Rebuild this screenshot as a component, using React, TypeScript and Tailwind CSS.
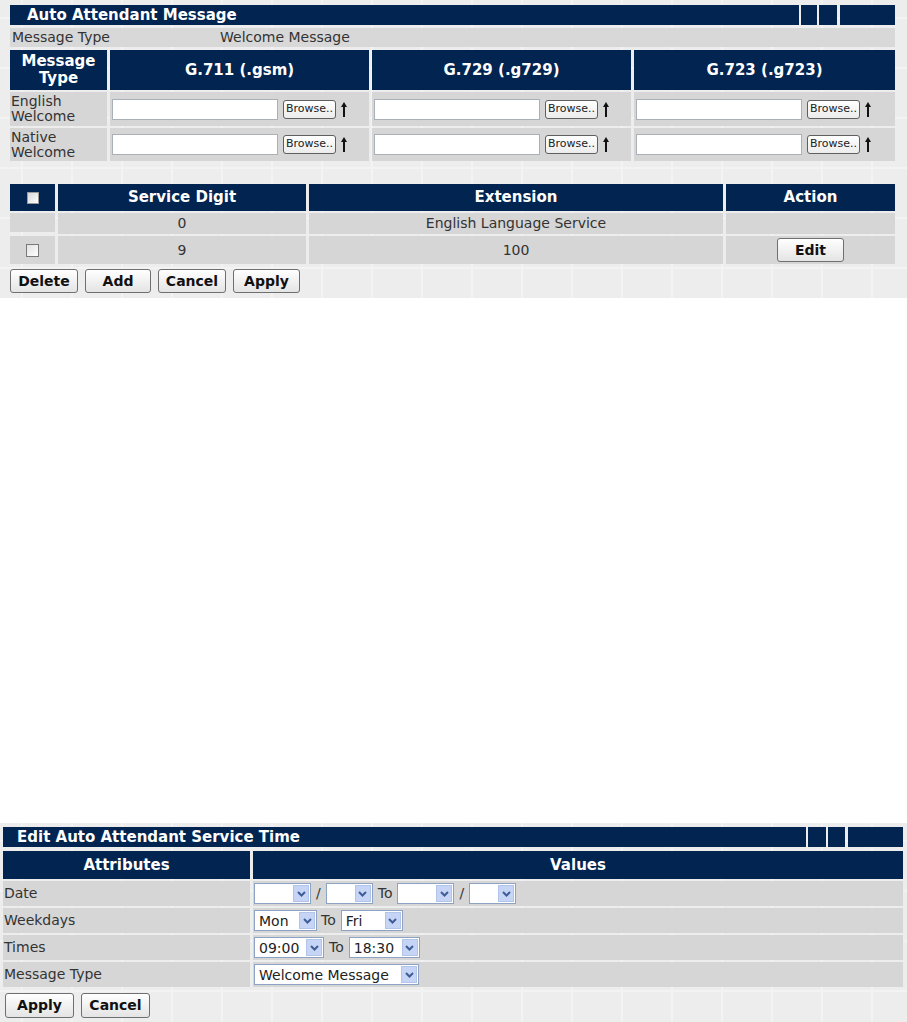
import React from "react";

const FONT = "font-['DejaVu_Sans','Verdana',sans-serif]";
const GRIDBG =
  "bg-[#ededed] bg-[image:linear-gradient(90deg,#f3f3f3_2px,transparent_2px),linear-gradient(#f3f3f3_2px,transparent_2px)] bg-size-[50px_50px] bg-position-[21px_17px]";

function TitleBar({
  title,
  padClass,
  b1,
  b2,
}: {
  title: string;
  padClass: string;
  b1: string;
  b2: string;
}) {
  return (
    <div className="flex h-[20px] gap-[2px]">
      <div
        className={`flex-1 bg-[#022450] text-white font-bold text-[15px] leading-[20px] ${padClass}`}
      >
        {title}
      </div>
      <div className={`${b1} bg-[#022450]`} />
      <div className={`${b2} bg-[#022450]`} />
      <div className="w-[55px] ml-[1px] bg-[#022450]" />
    </div>
  );
}

function Btn({ label, className }: { label: string; className: string }) {
  return (
    <div
      className={`flex items-center justify-center border border-[#6f6f6f] rounded-[3px] bg-linear-to-b from-white to-[#e4e4e4] text-[14px] font-bold text-[#111] ${className}`}
    >
      {label}
    </div>
  );
}

function UpArrow() {
  return (
    <svg width="6" height="15" viewBox="0 0 6 15" className="ml-[5px]">
      <path d="M3 0 L6 5 L0 5 Z" fill="#111" />
      <rect x="2" y="4" width="2" height="11" fill="#111" />
    </svg>
  );
}

function FileCell() {
  return (
    <div className="bg-[#d6d6d6] flex items-center pl-[2px]">
      <div className="w-[166px] h-[21px] border border-[#a9b0b8] bg-white" />
      <div className="ml-[5px] w-[53px] h-[19px] border border-[#5f5f5f] rounded-[3px] bg-linear-to-b from-white to-[#ececec] flex items-center pl-[2px] text-[11px] text-[#222] whitespace-nowrap">
        Browse..
      </div>
      <UpArrow />
    </div>
  );
}

function Chevron() {
  return (
    <svg width="9" height="6" viewBox="0 0 9 6">
      <path d="M1 1 L4.5 4.5 L8 1" stroke="#3e5c95" strokeWidth="2" fill="none" />
    </svg>
  );
}

function Select({ w, value }: { w: string; value?: string }) {
  return (
    <div className={`flex items-center h-[21px] border border-[#8ea3c4] bg-white ${w}`}>
      <span className="flex-1 pl-[4px] text-[14px] leading-none text-[#222] whitespace-nowrap">
        {value ?? ""}
      </span>
      <span className="w-[16px] h-[17px] mr-[1px] bg-[#c6d5f6] border border-[#b3c4ea] flex items-center justify-center">
        <Chevron />
      </span>
    </div>
  );
}

function Check() {
  return <div className="w-[13px] h-[13px] border border-[#7a7a7a] bg-linear-to-br from-[#e2e2e2] to-white" />;
}

export default function App() {
  const th = "bg-[#022450] text-white font-bold text-[15px] flex items-center justify-center text-center";
  const td = "bg-[#d6d6d6] text-[14px] text-[#333]";
  return (
    <div className={`${FONT} w-[907px] h-[1022px] bg-white overflow-hidden`}>
      {/* Top section */}
      <div className={`${GRIDBG} h-[298px] pt-[5px] pl-[10px] pr-[12px]`}>
        <TitleBar title="Auto Attendant Message" padClass="pl-[17px]" b1="w-[16px]" b2="w-[18px]" />
        <div className="mt-[3px] h-[19px] bg-[#d8d8d8] flex items-center text-[14px] text-[#333]">
          <span className="w-[210px] pl-[2px]">Message Type</span>
          <span>Welcome Message</span>
        </div>
        <div className="mt-[3px] grid grid-cols-[97px_259px_259px_1fr] gap-x-[3px] gap-y-[2px]">
          <div className={`${th} h-[40px] leading-[17px]`}>
            Message
            <br />
            Type
          </div>
          <div className={th}>G.711 (.gsm)</div>
          <div className={th}>G.729 (.g729)</div>
          <div className={th}>G.723 (.g723)</div>

          <div className={`${td} h-[34px] leading-[15px] pl-[1px] flex items-center`}>
            English
            <br />
            Welcome
          </div>
          <FileCell />
          <FileCell />
          <FileCell />

          <div className={`${td} h-[33px] leading-[15px] pl-[1px] flex items-center`}>
            Native
            <br />
            Welcome
          </div>
          <FileCell />
          <FileCell />
          <FileCell />
        </div>

        <div className="mt-[23px] grid grid-cols-[45px_248px_414px_1fr] gap-x-[3px] gap-y-[2px]">
          <div className={`${th} h-[27px]`}>
            <div className="w-[12px] h-[12px] border border-[#9a9a9a] bg-linear-to-br from-[#d8d8d8] to-white" />
          </div>
          <div className={th}>Service Digit</div>
          <div className={th}>Extension</div>
          <div className={th}>Action</div>

          <div className={`${td} h-[19px]`} />
          <div className={`${td} flex items-center justify-center`}>0</div>
          <div className={`${td} flex items-center justify-center`}>English Language Service</div>
          <div className={td} />

          <div className={`${td} h-[28px] flex items-center justify-center`}>
            <Check />
          </div>
          <div className={`${td} flex items-center justify-center`}>9</div>
          <div className={`${td} flex items-center justify-center`}>100</div>
          <div className={`${td} flex items-center justify-center`}>
            <Btn label="Edit" className="w-[67px] h-[24px]" />
          </div>
        </div>

        <div className="mt-[5px] flex gap-[7px]">
          <Btn label="Delete" className="w-[68px] h-[24px]" />
          <Btn label="Add" className="w-[66px] h-[24px]" />
          <Btn label="Cancel" className="w-[68px] h-[24px]" />
          <Btn label="Apply" className="w-[67px] h-[24px]" />
        </div>
      </div>

      {/* Spacer white area */}
      <div className="h-[525px]" />

      {/* Bottom section */}
      <div className={`${GRIDBG} h-[199px] pt-[4px] pl-[3px] pr-[4px]`}>
        <TitleBar title="Edit Auto Attendant Service Time" padClass="pl-[14px]" b1="w-[18px]" b2="w-[17px]" />
        <div className="mt-[4px] grid grid-cols-[247px_1fr] gap-x-[3px] gap-y-[2px]">
          <div className={`${th} h-[28px]`}>Attributes</div>
          <div className={th}>Values</div>

          <div className={`${td} h-[25px] flex items-center pl-[1px]`}>Date</div>
          <div className={`${td} flex items-center pl-[1px] text-[#333]`}>
            <Select w="w-[57px]" />
            <span className="mx-[5px]">/</span>
            <Select w="w-[47px]" />
            <span className="ml-[5px] mr-[5px]">To</span>
            <Select w="w-[57px]" />
            <span className="mx-[5px]">/</span>
            <Select w="w-[47px]" />
          </div>

          <div className={`${td} h-[25px] flex items-center pl-[1px]`}>Weekdays</div>
          <div className={`${td} flex items-center pl-[1px]`}>
            <Select w="w-[63px]" value="Mon" />
            <span className="ml-[4px] mr-[5px]">To</span>
            <Select w="w-[62px]" value="Fri" />
          </div>

          <div className={`${td} h-[25px] flex items-center pl-[1px]`}>Times</div>
          <div className={`${td} flex items-center pl-[1px]`}>
            <Select w="w-[70px]" value="09:00" />
            <span className="mx-[5px]">To</span>
            <Select w="w-[71px]" value="18:30" />
          </div>

          <div className={`${td} h-[25px] flex items-center pl-[1px]`}>Message Type</div>
          <div className={`${td} flex items-center pl-[1px]`}>
            <Select w="w-[165px]" value="Welcome Message" />
          </div>
        </div>
        <div className="mt-[6px] flex gap-[7px] pl-[2px]">
          <Btn label="Apply" className="w-[69px] h-[25px]" />
          <Btn label="Cancel" className="w-[69px] h-[25px]" />
        </div>
      </div>
    </div>
  );
}
